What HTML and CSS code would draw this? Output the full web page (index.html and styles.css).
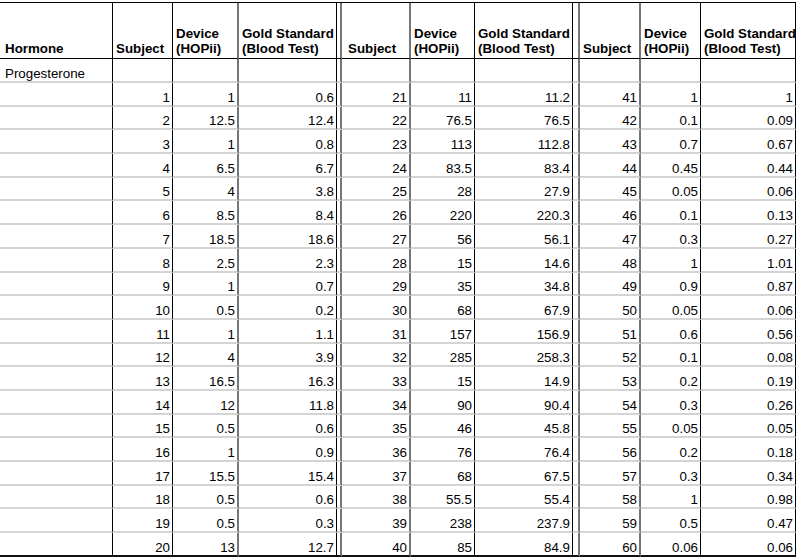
FILE: index.html
```html
<!DOCTYPE html>
<html lang="en">
<head>
<meta charset="utf-8">
<title>Progesterone – Device vs Gold Standard</title>
<link rel="stylesheet" href="styles.css">
</head>
<body>
<table class="sheet">
  <colgroup>
    <col class="c-hormone">
    <col class="c-subj">
    <col class="c-dev">
    <col class="c-gold">
    <col class="c-gap">
    <col class="c-subj2">
    <col class="c-dev2">
    <col class="c-gold">
    <col class="c-gap2">
    <col class="c-subj3">
    <col class="c-dev3">
    <col class="c-gold3">
  </colgroup>
  <thead>
    <tr class="head">
      <th class="first">Hormone</th>
      <th>Subject</th>
      <th>Device<br>(HOPii)</th>
      <th>Gold Standard<br>(Blood Test)</th>
      <th></th>
      <th class="s2">Subject</th>
      <th>Device<br>(HOPii)</th>
      <th>Gold Standard<br>(Blood Test)</th>
      <th></th>
      <th>Subject</th>
      <th>Device<br>(HOPii)</th>
      <th>Gold Standard<br>(Blood Test)</th>
    </tr>
  </thead>
  <tbody>
    <tr class="label"><td class="first">Progesterone</td><td></td><td></td><td></td><td></td><td></td><td></td><td></td><td></td><td></td><td></td><td></td></tr>
    <tr><td></td><td>1</td><td>1</td><td>0.6</td><td></td><td>21</td><td>11</td><td>11.2</td><td></td><td>41</td><td>1</td><td>1</td></tr>
    <tr><td></td><td>2</td><td>12.5</td><td>12.4</td><td></td><td>22</td><td>76.5</td><td>76.5</td><td></td><td>42</td><td>0.1</td><td>0.09</td></tr>
    <tr><td></td><td>3</td><td>1</td><td>0.8</td><td></td><td>23</td><td>113</td><td>112.8</td><td></td><td>43</td><td>0.7</td><td>0.67</td></tr>
    <tr><td></td><td>4</td><td>6.5</td><td>6.7</td><td></td><td>24</td><td>83.5</td><td>83.4</td><td></td><td>44</td><td>0.45</td><td>0.44</td></tr>
    <tr><td></td><td>5</td><td>4</td><td>3.8</td><td></td><td>25</td><td>28</td><td>27.9</td><td></td><td>45</td><td>0.05</td><td>0.06</td></tr>
    <tr><td></td><td>6</td><td>8.5</td><td>8.4</td><td></td><td>26</td><td>220</td><td>220.3</td><td></td><td>46</td><td>0.1</td><td>0.13</td></tr>
    <tr><td></td><td>7</td><td>18.5</td><td>18.6</td><td></td><td>27</td><td>56</td><td>56.1</td><td></td><td>47</td><td>0.3</td><td>0.27</td></tr>
    <tr><td></td><td>8</td><td>2.5</td><td>2.3</td><td></td><td>28</td><td>15</td><td>14.6</td><td></td><td>48</td><td>1</td><td>1.01</td></tr>
    <tr><td></td><td>9</td><td>1</td><td>0.7</td><td></td><td>29</td><td>35</td><td>34.8</td><td></td><td>49</td><td>0.9</td><td>0.87</td></tr>
    <tr><td></td><td>10</td><td>0.5</td><td>0.2</td><td></td><td>30</td><td>68</td><td>67.9</td><td></td><td>50</td><td>0.05</td><td>0.06</td></tr>
    <tr><td></td><td>11</td><td>1</td><td>1.1</td><td></td><td>31</td><td>157</td><td>156.9</td><td></td><td>51</td><td>0.6</td><td>0.56</td></tr>
    <tr><td></td><td>12</td><td>4</td><td>3.9</td><td></td><td>32</td><td>285</td><td>258.3</td><td></td><td>52</td><td>0.1</td><td>0.08</td></tr>
    <tr><td></td><td>13</td><td>16.5</td><td>16.3</td><td></td><td>33</td><td>15</td><td>14.9</td><td></td><td>53</td><td>0.2</td><td>0.19</td></tr>
    <tr><td></td><td>14</td><td>12</td><td>11.8</td><td></td><td>34</td><td>90</td><td>90.4</td><td></td><td>54</td><td>0.3</td><td>0.26</td></tr>
    <tr><td></td><td>15</td><td>0.5</td><td>0.6</td><td></td><td>35</td><td>46</td><td>45.8</td><td></td><td>55</td><td>0.05</td><td>0.05</td></tr>
    <tr><td></td><td>16</td><td>1</td><td>0.9</td><td></td><td>36</td><td>76</td><td>76.4</td><td></td><td>56</td><td>0.2</td><td>0.18</td></tr>
    <tr><td></td><td>17</td><td>15.5</td><td>15.4</td><td></td><td>37</td><td>68</td><td>67.5</td><td></td><td>57</td><td>0.3</td><td>0.34</td></tr>
    <tr><td></td><td>18</td><td>0.5</td><td>0.6</td><td></td><td>38</td><td>55.5</td><td>55.4</td><td></td><td>58</td><td>1</td><td>0.98</td></tr>
    <tr><td></td><td>19</td><td>0.5</td><td>0.3</td><td></td><td>39</td><td>238</td><td>237.9</td><td></td><td>59</td><td>0.5</td><td>0.47</td></tr>
    <tr class="last"><td></td><td>20</td><td>13</td><td>12.7</td><td></td><td>40</td><td>85</td><td>84.9</td><td></td><td>60</td><td>0.06</td><td>0.06</td></tr>
  </tbody>
</table>
</body>
</html>
```

FILE: styles.css
```css
html, body {
  margin: 0;
  padding: 0;
  background: #ffffff;
}

body {
  font-family: "Liberation Sans", Arial, sans-serif;
  font-size: 13.33px;
  color: #000000;
}

.sheet {
  margin-top: 2px;
  width: 796px;
  table-layout: fixed;
  border-collapse: separate;
  border-spacing: 0;
  border-top: 1px solid #000000;
}

.c-hormone { width: 113px; }
.c-subj    { width: 60px; }
.c-dev     { width: 66px; }
.c-gold    { width: 98px; }
.c-gap     { width: 5px; }
.c-subj2   { width: 69px; }
.c-dev2    { width: 64px; }
.c-gap2    { width: 7px; }
.c-subj3   { width: 61px; }
.c-dev3    { width: 60px; }
.c-gold3   { width: 95px; }

.sheet th,
.sheet td {
  box-sizing: border-box;
  padding: 0 2px 0 3px;
  line-height: 15px;
  vertical-align: bottom;
  white-space: nowrap;
  overflow: hidden;
  border-right: 1px solid #000000;
  border-bottom: 2px solid #d4d4d4;
}

/* medium grey separators */
.sheet tr > :nth-child(3),
.sheet tr > :nth-child(5),
.sheet tr > :nth-child(6),
.sheet tr > :nth-child(9),
.sheet tr > :nth-child(10) {
  border-right: 2px solid #767676;
}

.sheet th {
  font-weight: bold;
  text-align: left;
  padding-bottom: 2px;
  border-bottom: 1px solid #000000;
}

.sheet th.first,
.sheet td.first {
  padding-left: 5px;
}

.sheet th.s2 {
  padding-left: 6px;
}

.sheet td {
  text-align: right;
}

.sheet td.first {
  text-align: left;
}

.head { height: 56px; }
.label { height: 24px; }
.sheet tbody tr { height: 23.7px; }
.sheet tbody tr.label { height: 24px; }

.sheet tr.last td {
  border-bottom: 2px solid #111111;
}
```
